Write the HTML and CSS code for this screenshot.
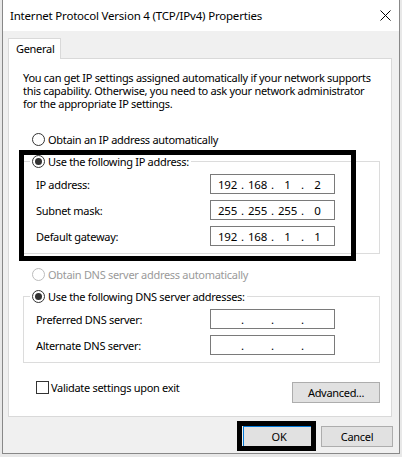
FILE: index.html
```html
<!DOCTYPE html>
<html lang="en">
<head>
    <meta charset="UTF-8">
    <title>Internet Protocol Version 4 (TCP/IPv4) Properties</title>
    <link rel="stylesheet" href="styles.css">
</head>
<body>
    <div class="window">
        <div class="titlebar">
            <span class="title">Internet Protocol Version 4 (TCP/IPv4) Properties</span>
            <svg class="close" width="11" height="11" viewBox="0 0 11 11">
                <path d="M0.5 0.5 L10.5 10.5 M10.5 0.5 L0.5 10.5" stroke="#000" stroke-width="1" fill="none"/>
            </svg>
        </div>
        <div class="content">
            <div class="tabs">
                <div class="tab">General</div>
            </div>
            <div class="panel">
                <p class="intro">You can get IP settings assigned automatically if your network supports<br>this capability. Otherwise, you need to ask your network administrator<br>for the appropriate IP settings.</p>

                <div class="radio-row first">
                    <span class="radio"></span>
                    <span>Obtain an IP address automatically</span>
                </div>

                <fieldset class="group">
                    <legend class="radio-row">
                        <span class="radio checked"></span>
                        <span>Use the following IP address:</span>
                    </legend>
                    <div class="field-row">
                        <span class="field-label">IP address:</span>
                        <div class="ip-box">
                            <span class="octet">192</span><span class="dot">.</span><span class="octet">168</span><span class="dot">.</span><span class="octet">1</span><span class="dot">.</span><span class="octet">2</span>
                        </div>
                    </div>
                    <div class="field-row">
                        <span class="field-label">Subnet mask:</span>
                        <div class="ip-box">
                            <span class="octet">255</span><span class="dot">.</span><span class="octet">255</span><span class="dot">.</span><span class="octet">255</span><span class="dot">.</span><span class="octet">0</span>
                        </div>
                    </div>
                    <div class="field-row">
                        <span class="field-label">Default gateway:</span>
                        <div class="ip-box">
                            <span class="octet">192</span><span class="dot">.</span><span class="octet">168</span><span class="dot">.</span><span class="octet">1</span><span class="dot">.</span><span class="octet">1</span>
                        </div>
                    </div>
                </fieldset>

                <div class="radio-row disabled dns-auto">
                    <span class="radio"></span>
                    <span>Obtain DNS server address automatically</span>
                </div>

                <fieldset class="group dns">
                    <legend class="radio-row">
                        <span class="radio checked"></span>
                        <span>Use the following DNS server addresses:</span>
                    </legend>
                    <div class="field-row">
                        <span class="field-label">Preferred DNS server:</span>
                        <div class="ip-box">
                            <span class="octet"></span><span class="dot">.</span><span class="octet"></span><span class="dot">.</span><span class="octet"></span><span class="dot">.</span><span class="octet"></span>
                        </div>
                    </div>
                    <div class="field-row">
                        <span class="field-label">Alternate DNS server:</span>
                        <div class="ip-box">
                            <span class="octet"></span><span class="dot">.</span><span class="octet"></span><span class="dot">.</span><span class="octet"></span><span class="dot">.</span><span class="octet"></span>
                        </div>
                    </div>
                </fieldset>

                <div class="panel-footer">
                    <div class="check-row">
                        <span class="checkbox"></span>
                        <span>Validate settings upon exit</span>
                    </div>
                    <div class="button advanced">Advanced...</div>
                </div>
            </div>

            <div class="dialog-buttons">
                <div class="button default">OK</div>
                <div class="button">Cancel</div>
            </div>
        </div>
    </div>

    <!-- чёрные рамки-выделения поверх диалога -->
    <div class="highlight hl-ip"></div>
    <div class="highlight hl-ok"></div>
</body>
</html>
```

FILE: styles.css
```css
* {
    margin: 0;
    padding: 0;
    box-sizing: border-box;
}

body {
    position: relative;
    background: #e8e8e8;
    font-family: "Noto Sans", "Open Sans", sans-serif;
    font-size: 11px;
    letter-spacing: -0.3px;
    color: #000;
    width: 402px;
    height: 457px;
    overflow: hidden;
}

.window {
    margin-left: 2px;
    width: 398px;
    height: 454px;
    border: 1px solid #888;
    border-top: none;
    background: #f0f0f0;
}

.titlebar {
    height: 31px;
    background: #fff;
    display: flex;
    align-items: center;
    justify-content: space-between;
    padding: 0 8px 0 7px;
}

.title {
    font-size: 11.5px;
    letter-spacing: -0.2px;
    white-space: nowrap;
}

.content {
    padding: 7px 7px 0 5px;
}

.tabs {
    display: flex;
    height: 20px;
}

.tab {
    position: relative;
    z-index: 1;
    width: 53px;
    height: 21px;
    padding-left: 7px;
    line-height: 20px;
    background: #fff;
    border: 1px solid #d9d9d9;
    border-bottom: none;
    white-space: nowrap;
}

.panel {
    background: #fff;
    border: 1px solid #d9d9d9;
    padding-top: 12px;
}

.intro {
    margin-left: 14px;
    line-height: 13px;
    white-space: nowrap;
}

.radio-row {
    display: flex;
    align-items: center;
    gap: 3px;
    height: 14px;
    white-space: nowrap;
}

.radio-row.first {
    margin: 22px 0 0 23px;
}

.radio-row.disabled {
    color: #9a9a9a;
}

.dns-auto {
    margin: 13px 0 0 23px;
}

.radio {
    width: 13px;
    height: 13px;
    border: 1px solid #333;
    border-radius: 50%;
    background: #fff;
    display: flex;
    align-items: center;
    justify-content: center;
    flex-shrink: 0;
}

.radio.checked::after {
    content: "";
    width: 7px;
    height: 7px;
    border-radius: 50%;
    background: #333;
}

.disabled .radio {
    border-color: #bcbcbc;
}

.group {
    margin: 8px 11px 0 14px;
    border: 1px solid #dcdcdc;
    padding: 6px 44px 7px 12px;
    min-width: 0;
    display: flex;
    flex-direction: column;
    gap: 6px;
}

.group legend {
    margin-left: -6px;
    padding: 0 2px;
}

.group.dns {
    margin-top: 8px;
}

.field-row {
    display: flex;
    align-items: center;
    height: 20px;
}

.field-label {
    width: 174px;
    white-space: nowrap;
}

.ip-box {
    width: 125px;
    height: 20px;
    border: 1px solid #7a7a7a;
    background: #fff;
    display: flex;
    align-items: center;
    padding-left: 5px;
    font-size: 11.5px;
}

.octet {
    width: 23px;
    text-align: center;
}

.dot {
    width: 7px;
    text-align: center;
}

.panel-footer {
    display: flex;
    justify-content: space-between;
    align-items: flex-start;
    margin: 17px 11px 13px 27px;
}

.check-row {
    display: flex;
    align-items: center;
    gap: 2px;
    height: 14px;
    white-space: nowrap;
}

.checkbox {
    width: 13px;
    height: 13px;
    border: 1px solid #333;
    background: #fff;
}

.button {
    height: 21px;
    background: #e1e1e1;
    border: 1px solid #adadad;
    display: flex;
    align-items: center;
    justify-content: center;
    white-space: nowrap;
}

.advanced {
    width: 88px;
    margin-top: 2px;
}

.dialog-buttons {
    display: flex;
    justify-content: flex-end;
    gap: 6px;
    margin: 9px -1px 0 0;
}

.dialog-buttons .button {
    width: 72px;
}

.button.default {
    border-color: #0078d7;
}

.highlight {
    position: absolute;
    border: 5px solid #000;
    pointer-events: none;
}

.hl-ip {
    left: 19px;
    top: 150px;
    width: 337px;
    height: 111px;
}

.hl-ok {
    left: 237px;
    top: 421px;
    width: 79px;
    height: 30px;
}
```
